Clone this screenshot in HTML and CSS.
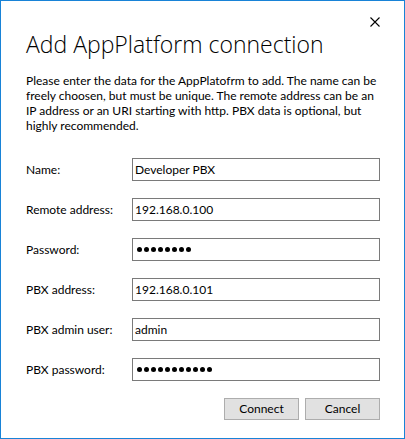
FILE: index.html
```html
<!DOCTYPE html>
<html>
<head>
<meta charset="utf-8">
<link rel="stylesheet" href="styles.css">
</head>
<body>
<div class="window">
  <div class="titlebar">
    <span class="close" aria-label="Close">
      <svg width="10" height="10" viewBox="0 0 10 10"><path d="M0.5 0.5 L9.5 9.5 M9.5 0.5 L0.5 9.5" stroke="#000" stroke-width="1.1" fill="none"/></svg>
    </span>
  </div>
  <h1 class="title">Add AppPlatform connection</h1>
  <p class="desc">Please enter the data for the AppPlatofrm to add. The name can be freely choosen, but must be unique. The remote address can be an IP address or an URI starting with http. PBX data is optional, but highly recommended.</p>
  <div class="form">
    <div class="label">Name:</div>
    <div class="field">Developer PBX</div>
    <div class="label">Remote address:</div>
    <div class="field">192.168.0.100</div>
    <div class="label">Password:</div>
    <div class="field dots" aria-label="password"><i></i><i></i><i></i><i></i><i></i><i></i><i></i><i></i></div>
    <div class="label">PBX address:</div>
    <div class="field">192.168.0.101</div>
    <div class="label">PBX admin user:</div>
    <div class="field">admin</div>
    <div class="label">PBX password:</div>
    <div class="field dots" aria-label="PBX password"><i></i><i></i><i></i><i></i><i></i><i></i><i></i><i></i><i></i><i></i><i></i></div>
  </div>
  <div class="buttons">
    <div class="btn">Connect</div>
    <div class="btn">Cancel</div>
  </div>
</div>
</body>
</html>
```
FILE: styles.css
```css
html, body {
  margin: 0;
  padding: 0;
  background: #fff;
}
.window {
  box-sizing: border-box;
  width: 405px;
  height: 439px;
  border: 1px solid #1883d7;
  background: #fff;
  font-family: Lato, "Noto Sans", sans-serif;
  font-size: 12px;
  color: #000;
  padding: 0 24px 0 25px;
}
.titlebar {
  display: flex;
  justify-content: flex-end;
  height: 28px;
  padding-top: 16px;
  box-sizing: border-box;
}
.close {
  display: flex;
  width: 10px;
  height: 10px;
}
.title {
  margin: 0;
  font-family: "Open Sans", "Noto Sans", sans-serif;
  font-weight: 300;
  font-size: 23px;
  line-height: 30px;
  height: 30px;
  color: #000;
}
.desc {
  margin: 14px 0 0 0;
  line-height: 15px;
  font-size: 12px;
}
.form {
  margin-top: 25px;
  display: grid;
  grid-template-columns: 106px 1fr;
  row-gap: 17px;
  align-items: center;
}
.label {
  font-size: 12px;
}
.field {
  box-sizing: border-box;
  height: 23px;
  border: 1px solid #7a7a7a;
  padding: 0 2px;
  line-height: 21px;
  font-size: 12px;
  white-space: nowrap;
  overflow: hidden;
}
.dots {
  display: flex;
  align-items: center;
  gap: 2px;
  padding-left: 4px;
}
.dots i {
  display: block;
  width: 5px;
  height: 5px;
  border-radius: 50%;
  background: #000;
}
.buttons {
  margin-top: 17px;
  display: flex;
  justify-content: flex-end;
  gap: 6px;
}
.btn {
  box-sizing: border-box;
  width: 75px;
  height: 22px;
  border: 1px solid #adadad;
  background: #e1e1e1;
  text-align: center;
  line-height: 20px;
  font-size: 12px;
}
```
